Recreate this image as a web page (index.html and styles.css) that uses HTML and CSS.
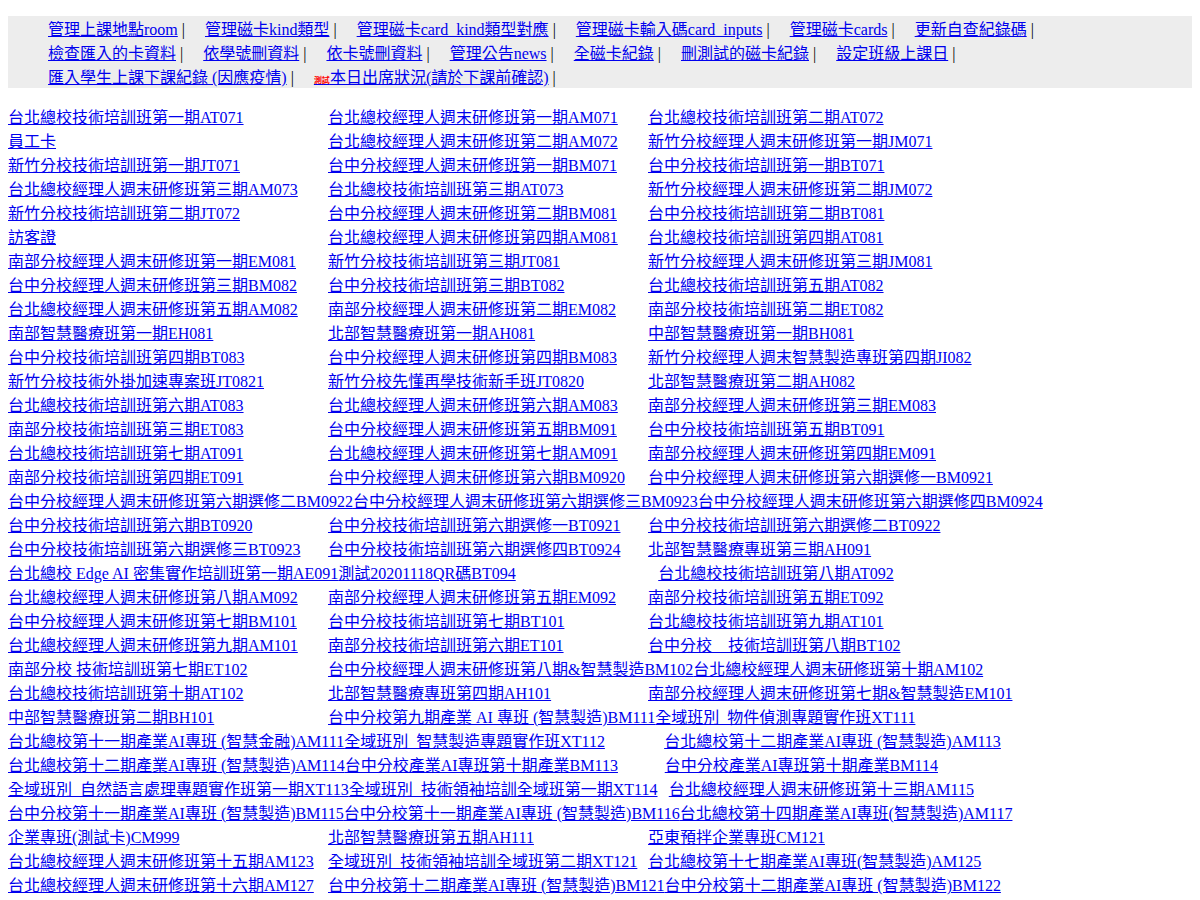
FILE: index.html
```html
<!DOCTYPE html>
<html lang="zh-Hant">
<head>
  <meta charset="UTF-8">
  <title>磁卡管理</title>
  <link rel="stylesheet" href="styles.css">
</head>
<body>

<nav>
  <ul class="menu">
    <li><a href="#">管理上課地點room</a> |</li>
    <li><a href="#">管理磁卡kind類型</a> |</li>
    <li><a href="#">管理磁卡card_kind類型對應</a> |</li>
    <li><a href="#">管理磁卡輸入碼card_inputs</a> |</li>
    <li><a href="#">管理磁卡cards</a> |</li>
    <li><a href="#">更新自查紀錄碼</a> |</li>
    <li><a href="#">檢查匯入的卡資料</a> |</li>
    <li><a href="#">依學號刪資料</a> |</li>
    <li><a href="#">依卡號刪資料</a> |</li>
    <li><a href="#">管理公告news</a> |</li>
    <li><a href="#">全磁卡紀錄</a> |</li>
    <li><a href="#">刪測試的磁卡紀錄</a> |</li>
    <li><a href="#">設定班級上課日</a> |</li>
    <li><a href="#">匯入學生上課下課紀錄 (因應疫情)</a> |</li>
    <li><a href="#"><span class="beta">測試</span>本日出席狀況(請於下課前確認)</a> |</li>
  </ul>
</nav>

<div class="class-list">
  <div class="class"><a href="#">台北總校技術培訓班第一期AT071</a></div>
  <div class="class"><a href="#">台北總校經理人週末研修班第一期AM071</a></div>
  <div class="class"><a href="#">台北總校技術培訓班第二期AT072</a></div>
  <div class="class"><a href="#">員工卡</a></div>
  <div class="class"><a href="#">台北總校經理人週末研修班第二期AM072</a></div>
  <div class="class"><a href="#">新竹分校經理人週末研修班第一期JM071</a></div>
  <div class="class"><a href="#">新竹分校技術培訓班第一期JT071</a></div>
  <div class="class"><a href="#">台中分校經理人週末研修班第一期BM071</a></div>
  <div class="class"><a href="#">台中分校技術培訓班第一期BT071</a></div>
  <div class="class"><a href="#">台北總校經理人週末研修班第三期AM073</a></div>
  <div class="class"><a href="#">台北總校技術培訓班第三期AT073</a></div>
  <div class="class"><a href="#">新竹分校經理人週末研修班第二期JM072</a></div>
  <div class="class"><a href="#">新竹分校技術培訓班第二期JT072</a></div>
  <div class="class"><a href="#">台中分校經理人週末研修班第二期BM081</a></div>
  <div class="class"><a href="#">台中分校技術培訓班第二期BT081</a></div>
  <div class="class"><a href="#">訪客證</a></div>
  <div class="class"><a href="#">台北總校經理人週末研修班第四期AM081</a></div>
  <div class="class"><a href="#">台北總校技術培訓班第四期AT081</a></div>
  <div class="class"><a href="#">南部分校經理人週末研修班第一期EM081</a></div>
  <div class="class"><a href="#">新竹分校技術培訓班第三期JT081</a></div>
  <div class="class"><a href="#">新竹分校經理人週末研修班第三期JM081</a></div>
  <div class="class"><a href="#">台中分校經理人週末研修班第三期BM082</a></div>
  <div class="class"><a href="#">台中分校技術培訓班第三期BT082</a></div>
  <div class="class"><a href="#">台北總校技術培訓班第五期AT082</a></div>
  <div class="class"><a href="#">台北總校經理人週末研修班第五期AM082</a></div>
  <div class="class"><a href="#">南部分校經理人週末研修班第二期EM082</a></div>
  <div class="class"><a href="#">南部分校技術培訓班第二期ET082</a></div>
  <div class="class"><a href="#">南部智慧醫療班第一期EH081</a></div>
  <div class="class"><a href="#">北部智慧醫療班第一期AH081</a></div>
  <div class="class"><a href="#">中部智慧醫療班第一期BH081</a></div>
  <div class="class"><a href="#">台中分校技術培訓班第四期BT083</a></div>
  <div class="class"><a href="#">台中分校經理人週末研修班第四期BM083</a></div>
  <div class="class"><a href="#">新竹分校經理人週末智慧製造專班第四期JI082</a></div>
  <div class="class"><a href="#">新竹分校技術外掛加速專案班JT0821</a></div>
  <div class="class"><a href="#">新竹分校先懂再學技術新手班JT0820</a></div>
  <div class="class"><a href="#">北部智慧醫療班第二期AH082</a></div>
  <div class="class"><a href="#">台北總校技術培訓班第六期AT083</a></div>
  <div class="class"><a href="#">台北總校經理人週末研修班第六期AM083</a></div>
  <div class="class"><a href="#">南部分校經理人週末研修班第三期EM083</a></div>
  <div class="class"><a href="#">南部分校技術培訓班第三期ET083</a></div>
  <div class="class"><a href="#">台中分校經理人週末研修班第五期BM091</a></div>
  <div class="class"><a href="#">台中分校技術培訓班第五期BT091</a></div>
  <div class="class"><a href="#">台北總校技術培訓班第七期AT091</a></div>
  <div class="class"><a href="#">台北總校經理人週末研修班第七期AM091</a></div>
  <div class="class"><a href="#">南部分校經理人週末研修班第四期EM091</a></div>
  <div class="class"><a href="#">南部分校技術培訓班第四期ET091</a></div>
  <div class="class"><a href="#">台中分校經理人週末研修班第六期BM0920</a></div>
  <div class="class"><a href="#">台中分校經理人週末研修班第六期選修一BM0921</a></div>
  <div class="class"><a href="#">台中分校經理人週末研修班第六期選修二BM0922</a></div>
  <div class="class"><a href="#">台中分校經理人週末研修班第六期選修三BM0923</a></div>
  <div class="class"><a href="#">台中分校經理人週末研修班第六期選修四BM0924</a></div>
  <div class="class"><a href="#">台中分校技術培訓班第六期BT0920</a></div>
  <div class="class"><a href="#">台中分校技術培訓班第六期選修一BT0921</a></div>
  <div class="class"><a href="#">台中分校技術培訓班第六期選修二BT0922</a></div>
  <div class="class"><a href="#">台中分校技術培訓班第六期選修三BT0923</a></div>
  <div class="class"><a href="#">台中分校技術培訓班第六期選修四BT0924</a></div>
  <div class="class"><a href="#">北部智慧醫療專班第三期AH091</a></div>
  <div class="class"><a href="#">台北總校 Edge AI 密集實作培訓班第一期AE091</a></div>
  <div class="class"><a href="#">測試20201118QR碼BT094</a></div>
  <div class="class"><a href="#">台北總校技術培訓班第八期AT092</a></div>
  <div class="class"><a href="#">台北總校經理人週末研修班第八期AM092</a></div>
  <div class="class"><a href="#">南部分校經理人週末研修班第五期EM092</a></div>
  <div class="class"><a href="#">南部分校技術培訓班第五期ET092</a></div>
  <div class="class"><a href="#">台中分校經理人週末研修班第七期BM101</a></div>
  <div class="class"><a href="#">台中分校技術培訓班第七期BT101</a></div>
  <div class="class"><a href="#">台北總校技術培訓班第九期AT101</a></div>
  <div class="class"><a href="#">台北總校經理人週末研修班第九期AM101</a></div>
  <div class="class"><a href="#">南部分校技術培訓班第六期ET101</a></div>
  <div class="class"><a href="#">台中分校　技術培訓班第八期BT102</a></div>
  <div class="class"><a href="#">南部分校 技術培訓班第七期ET102</a></div>
  <div class="class"><a href="#">台中分校經理人週末研修班第八期&amp;智慧製造BM102</a></div>
  <div class="class"><a href="#">台北總校經理人週末研修班第十期AM102</a></div>
  <div class="class"><a href="#">台北總校技術培訓班第十期AT102</a></div>
  <div class="class"><a href="#">北部智慧醫療專班第四期AH101</a></div>
  <div class="class"><a href="#">南部分校經理人週末研修班第七期&amp;智慧製造EM101</a></div>
  <div class="class"><a href="#">中部智慧醫療班第二期BH101</a></div>
  <div class="class"><a href="#">台中分校第九期產業 AI 專班 (智慧製造)BM111</a></div>
  <div class="class"><a href="#">全域班別_物件偵測專題實作班XT111</a></div>
  <div class="class"><a href="#">台北總校第十一期產業AI專班 (智慧金融)AM111</a></div>
  <div class="class"><a href="#">全域班別_智慧製造專題實作班XT112</a></div>
  <div class="class"><a href="#">台北總校第十二期產業AI專班 (智慧製造)AM113</a></div>
  <div class="class"><a href="#">台北總校第十二期產業AI專班 (智慧製造)AM114</a></div>
  <div class="class"><a href="#">台中分校產業AI專班第十期產業BM113</a></div>
  <div class="class"><a href="#">台中分校產業AI專班第十期產業BM114</a></div>
  <div class="class"><a href="#">全域班別_自然語言處理專題實作班第一期XT113</a></div>
  <div class="class"><a href="#">全域班別_技術領袖培訓全域班第一期XT114</a></div>
  <div class="class"><a href="#">台北總校經理人週末研修班第十三期AM115</a></div>
  <div class="class"><a href="#">台中分校第十一期產業AI專班 (智慧製造)BM115</a></div>
  <div class="class"><a href="#">台中分校第十一期產業AI專班 (智慧製造)BM116</a></div>
  <div class="class"><a href="#">台北總校第十四期產業AI專班(智慧製造)AM117</a></div>
  <div class="class"><a href="#">企業專班(測試卡)CM999</a></div>
  <div class="class"><a href="#">北部智慧醫療班第五期AH111</a></div>
  <div class="class"><a href="#">亞東預拌企業專班CM121</a></div>
  <div class="class"><a href="#">台北總校經理人週末研修班第十五期AM123</a></div>
  <div class="class"><a href="#">全域班別_技術領袖培訓全域班第二期XT121</a></div>
  <div class="class"><a href="#">台北總校第十七期產業AI專班(智慧製造)AM125</a></div>
  <div class="class"><a href="#">台北總校經理人週末研修班第十六期AM127</a></div>
  <div class="class"><a href="#">台中分校第十二期產業AI專班 (智慧製造)BM121</a></div>
  <div class="class"><a href="#">台中分校第十二期產業AI專班 (智慧製造)BM122</a></div>
</div>

</body>
</html>
```
FILE: styles.css
```css
body {
  margin: 16px 8px 8px;
  font-family: "Liberation Serif", "Noto Sans CJK TC", serif;
  font-size: 16px;
  color: #000;
  background: #fff;
}
a {
  color: #0000ee;
  text-decoration: underline;
}
.menu {
  display: flex;
  flex-wrap: wrap;
  margin: 0 0 16px;
  padding: 0 0 0 40px;
  list-style: none;
  background: #ededed;
}
.menu li {
  margin-right: 20px;
}
.beta {
  font-size: 8px;
  font-weight: bold;
  color: red;
}
.class-list {
  display: flex;
  flex-wrap: wrap;
}
/* long names push the next one along */
.class {
  min-width: 320px;
}
```
